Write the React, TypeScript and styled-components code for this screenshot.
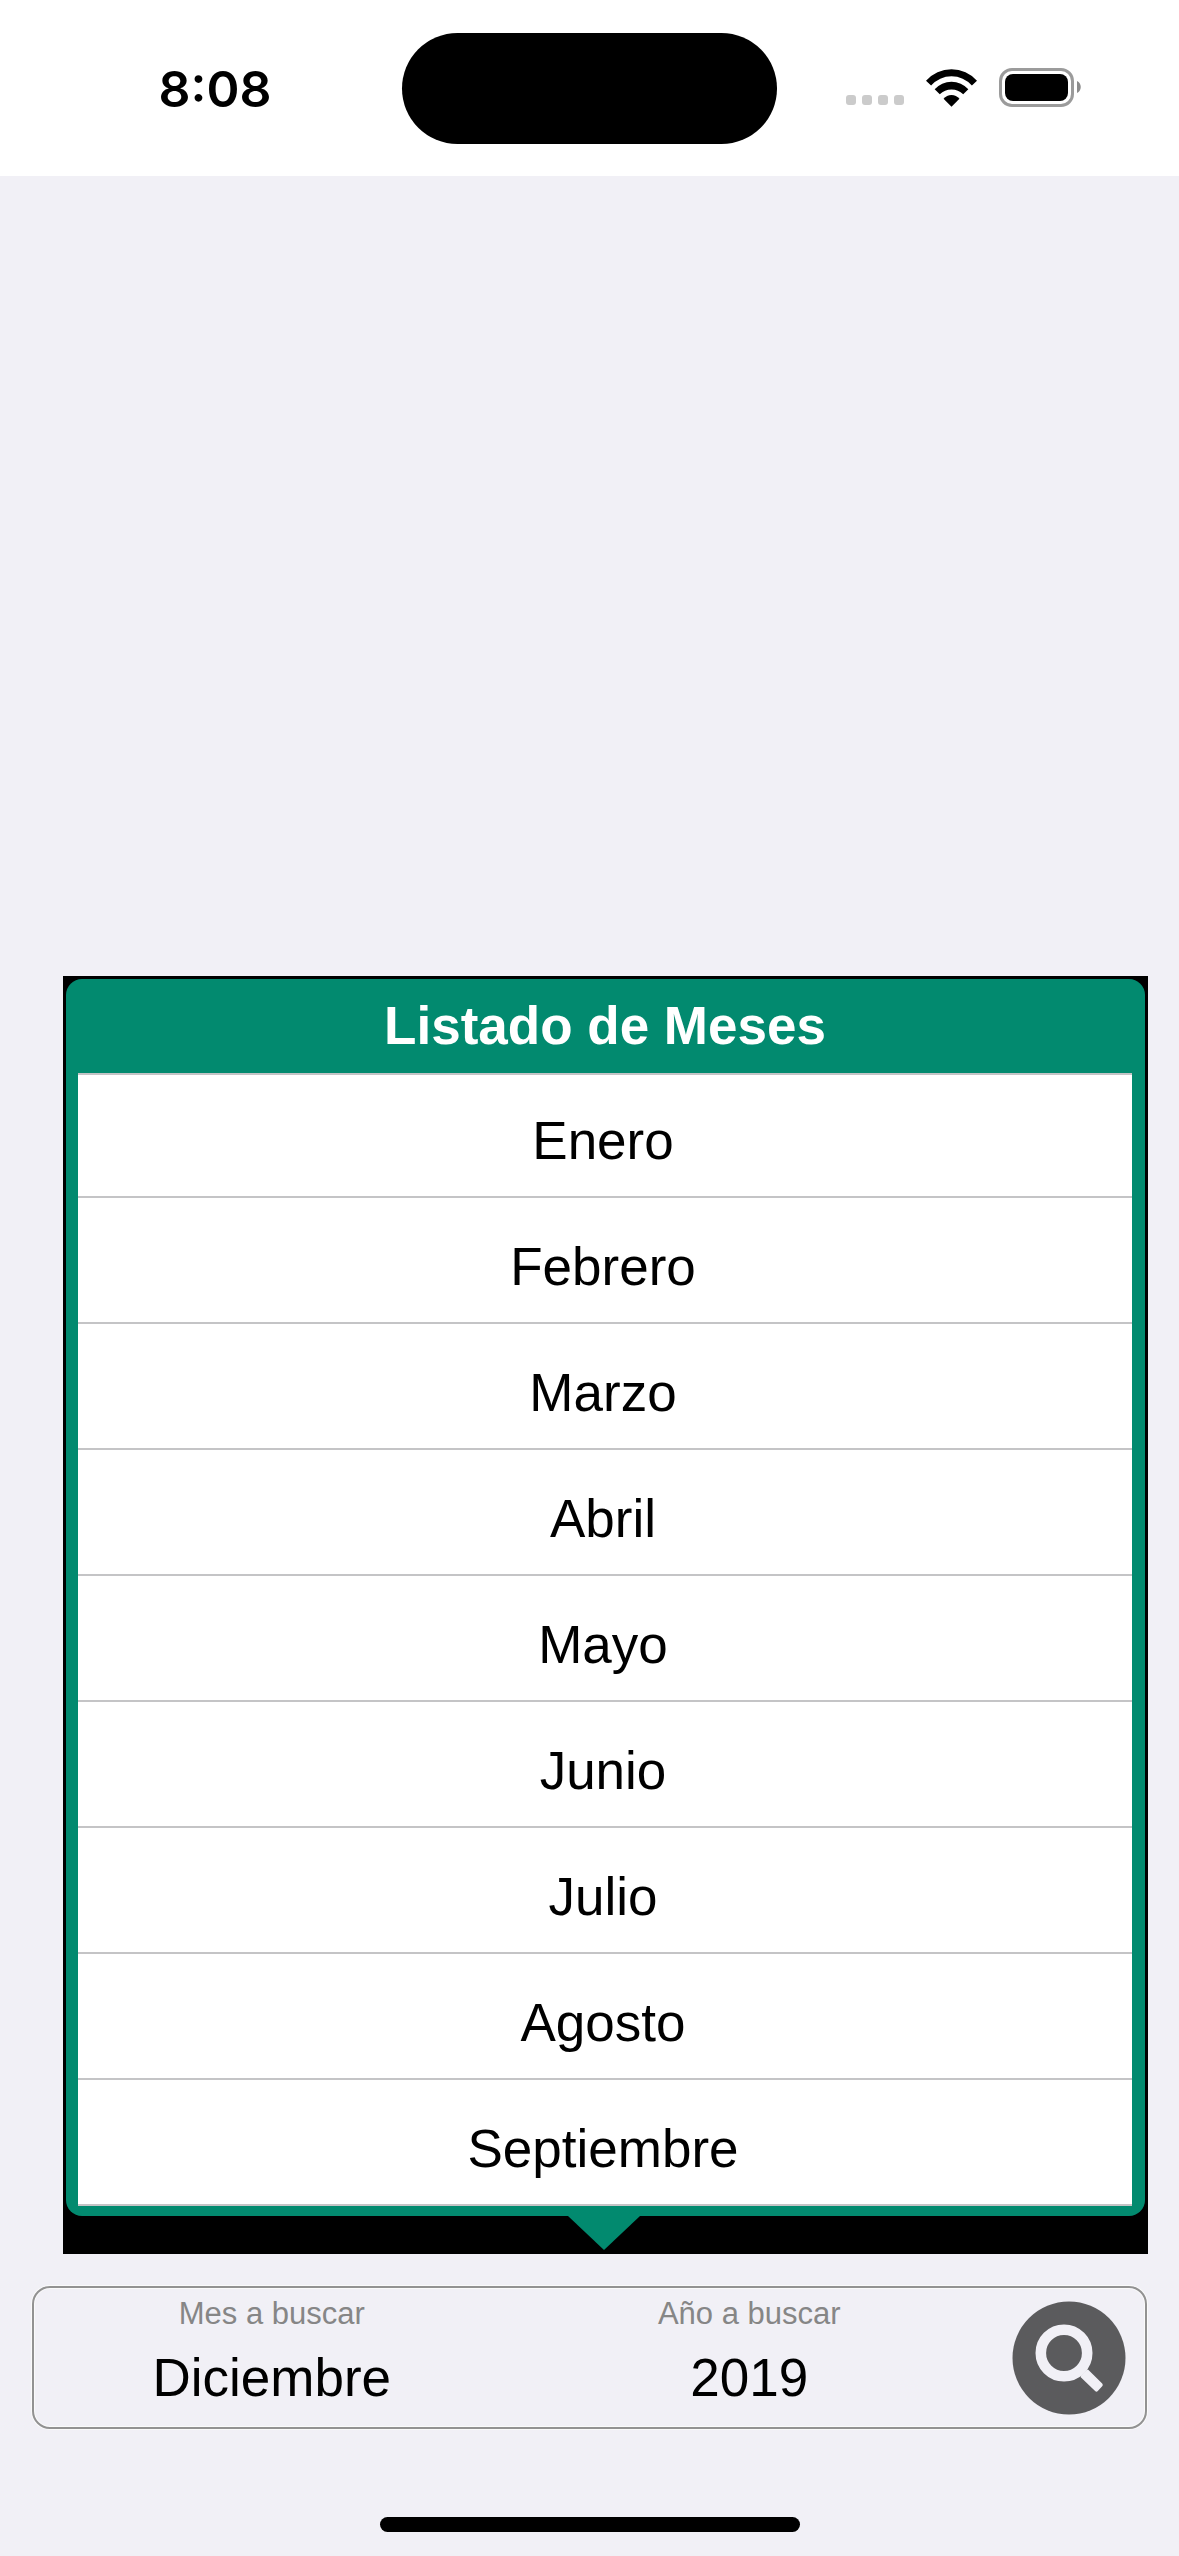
import React, { useState } from "react";
import styled, { createGlobalStyle } from "styled-components";

const MONTHS = [
  "Enero",
  "Febrero",
  "Marzo",
  "Abril",
  "Mayo",
  "Junio",
  "Julio",
  "Agosto",
  "Septiembre",
];

const green = "#028a6f";
const surface = "#f1f0f6";

const GlobalStyle = createGlobalStyle`
  * { box-sizing: border-box; }
  body {
    margin: 0;
    background: ${surface};
    color: #000;
    font-family: "Liberation Sans", Arial, Helvetica, sans-serif;
  }
  button {
    margin: 0;
    padding: 0;
    border: 0;
    background: none;
    color: inherit;
    font: inherit;
    cursor: pointer;
  }
`;

const Screen = styled.div`
  display: flex;
  flex-direction: column;
  min-height: 100vh;
`;

const StatusBar = styled.header`
  display: grid;
  grid-template-columns: 1fr 375px 1fr;
  align-items: center;
  height: 176px;
  background: #fff;
`;

const Clock = styled.time`
  justify-self: center;
  padding: 2px 0 0 28px;
  font: 600 50px/64px Inter, "Liberation Sans", sans-serif;
`;

const Island = styled.div`
  height: 111px;
  margin-top: 1px;
  border-radius: 56px;
  background: #000;
`;

const Indicators = styled.div`
  display: flex;
  justify-content: flex-end;
  align-items: flex-end;
  gap: 22px;
  padding: 0 98px 1px 0;
`;

const Dots = styled.div`
  display: flex;
  gap: 6px;
  padding-bottom: 2px;
`;

const Dot = styled.span`
  width: 10px;
  height: 10px;
  border-radius: 3px;
  background: #cbcbcb;
`;

const Main = styled.main`
  flex: 1;
  display: flex;
  flex-direction: column;
  justify-content: flex-end;
  gap: 32px;
  padding: 32px 31px 88px 32px;
`;

const Popup = styled.section`
  display: flex;
  flex-direction: column;
  margin-left: 31px;
  padding: 3px 3px 4px;
  background: #000;
`;

const Panel = styled.div`
  padding: 0 13px 10px 12px;
  border-radius: 16px;
  background: ${green};
`;

const Title = styled.h1`
  margin: 0;
  font-size: 53px;
  line-height: 94px;
  font-weight: 700;
  text-align: center;
  color: #fff;
`;

const MonthList = styled.ul`
  margin: 0;
  padding: 0;
  list-style: none;
  border-top: 2px solid #c4c4c6;
  background: #fff;
`;

const MonthItem = styled.li`
  display: flex;
  height: 126px;
  border-bottom: 2px solid #c4c4c6;

  &:first-child {
    height: 123px;
  }
`;

const MonthButton = styled.button`
  && {
    flex: 1;
    display: flex;
    align-items: flex-end;
    justify-content: center;
    padding: 0 4px 23px 0;
    font-size: 53px;
    line-height: 64px;
  }
`;

const Pointer = styled.svg`
  display: block;
  align-self: center;
  margin-right: 4px;
`;

const SearchBar = styled.form`
  display: grid;
  grid-template-columns: 1fr 1fr 156px;
  margin-right: 1px;
  border: 2px solid #929292;
  border-radius: 18px;
  box-shadow: 0 0 0 1px #fafafa, inset 0 0 0 1px #fafafa;
`;

const Field = styled.div`
  display: flex;
  flex-direction: column;
  gap: 14px;
  padding: 8px 2px 17px 0;
`;

const FieldLabel = styled.label`
  font-size: 31px;
  line-height: 36px;
  text-align: center;
  color: #868686;
`;

const FieldValue = styled.button`
  && {
    font-size: 53px;
    line-height: 64px;
  }
`;

const SearchButton = styled.button`
  && {
    align-self: center;
    justify-self: end;
    width: 114px;
    height: 114px;
    margin-right: 19px;
    border-radius: 50%;
  }
`;

const Icon = styled.svg`
  display: block;
`;

const HomeArea = styled.footer`
  display: flex;
  justify-content: center;
  padding-bottom: 24px;
`;

const HomeIndicator = styled.div`
  width: 420px;
  height: 15px;
  border-radius: 8px;
  background: #000;
`;

const WifiIcon = () => (
  <Icon width="51" height="38" viewBox="0 0 50 37" aria-hidden="true">
    <path d="M0 11.3A33.3 33.3 0 0 1 50 11.3L45 16A26.7 26.7 0 0 0 5 16Z" />
    <path d="M8.5 19.7A22.1 22.1 0 0 1 41.5 19.7L36.5 24.7A16.4 16.4 0 0 0 13.5 24.7Z" />
    <path d="M17.2 29A10.1 10.1 0 0 1 32.8 29L25 37Z" />
  </Icon>
);

const BatteryIcon = () => (
  <Icon width="82" height="39" viewBox="0 0 82 39" aria-hidden="true">
    <rect x="1.5" y="1.5" width="72" height="36" rx="11.5" fill="none" stroke="#9b9b9b" strokeWidth="3" />
    <rect x="6" y="6" width="63" height="27" rx="8" />
    <path d="M78 13C83 15 83 23 78 25Z" fill="#8c8c8c" />
  </Icon>
);

const SearchIcon = () => (
  <Icon width="114" height="114" viewBox="-57 -57 114 114" aria-hidden="true">
    <circle r="56.5" fill="#5b5b5d" />
    <circle cx="-5" cy="-5" r="23.2" fill="none" stroke={surface} strokeWidth="10.6" />
    <path d="M12 17.5L17.5 12L19 11.5L33.2 25.4Q34.5 26.8 33.2 28.2L28.8 33Q27.5 34.3 26.1 33L11.5 19Z" fill={surface} />
  </Icon>
);

export default function App() {
  const [month, setMonth] = useState("Diciembre");

  return (
    <>
      <GlobalStyle />
      <Screen>
        <StatusBar>
          <Clock>8:08</Clock>
          <Island />
          <Indicators>
            <Dots>
              <Dot />
              <Dot />
              <Dot />
              <Dot />
            </Dots>
            <WifiIcon />
            <BatteryIcon />
          </Indicators>
        </StatusBar>

        <Main>
          <Popup aria-labelledby="popup-title">
            <Panel>
              <Title id="popup-title">Listado de Meses</Title>
              <MonthList>
                {MONTHS.map((name) => (
                  <MonthItem key={name}>
                    <MonthButton type="button" onClick={() => setMonth(name)}>
                      {name}
                    </MonthButton>
                  </MonthItem>
                ))}
              </MonthList>
            </Panel>
            <Pointer width="72" height="34" viewBox="0 0 72 34" aria-hidden="true">
              <path d="M0 0H72L36 34Z" fill={green} />
            </Pointer>
          </Popup>

          <SearchBar onSubmit={(event) => event.preventDefault()}>
            <Field>
              <FieldLabel htmlFor="month">Mes a buscar</FieldLabel>
              <FieldValue id="month" type="button" aria-haspopup="listbox">
                {month}
              </FieldValue>
            </Field>
            <Field>
              <FieldLabel htmlFor="year">Año a buscar</FieldLabel>
              <FieldValue id="year" type="button" aria-haspopup="listbox">
                2019
              </FieldValue>
            </Field>
            <SearchButton type="submit" aria-label="Buscar">
              <SearchIcon />
            </SearchButton>
          </SearchBar>
        </Main>

        <HomeArea>
          <HomeIndicator />
        </HomeArea>
      </Screen>
    </>
  );
}
